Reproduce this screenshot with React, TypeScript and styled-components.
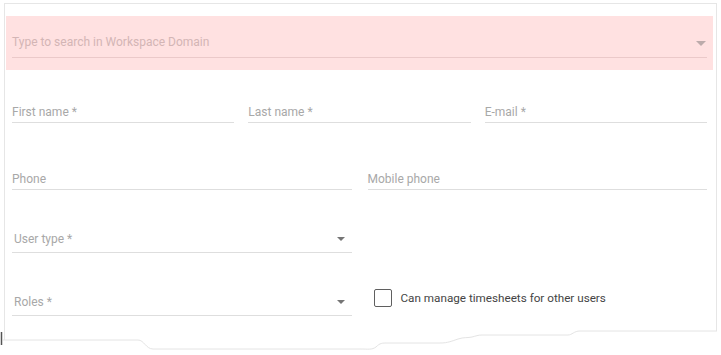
import styled, { createGlobalStyle } from 'styled-components'

const GlobalStyle = createGlobalStyle`
	html, body {
		margin: 0;
		background: #fff;
		font-family: Roboto, 'Noto Sans', sans-serif;
	}
`

function Arrow({ color, width, height }: { color: string; width: number; height: number }) {
	return (
		<svg width={width} height={height} viewBox={`0 0 ${width} ${height}`}>
			<polygon points={`0,0 ${width},0 ${width / 2},${height}`} fill={color} />
		</svg>
	)
}

function TornEdge() {
	// page coords shifted by y=320
	const line =
		'M3 20 L138 20 C144 20 146 29 153 29 L360 29 C368 29 372 30 376 27 C380 23 382 23 388 23 L440 23 C448 23 452 21 458 19 C464 17 468 18 472 17 C476 16 478 15 482 15 L568 15 C572 15 574 11 580 11 L717 11'
	return (
		<Tear width={721} height={35} viewBox="0 0 721 35">
			<path d={line + ' L721 11 L721 35 L0 35 L0 20 Z'} fill="#fff" />
			<path d={line} fill="none" stroke="#e4e4e4" strokeWidth={1} />
			<line x1={1.5} y1={12} x2={1.5} y2={25} stroke="#555" strokeWidth={1.5} />
		</Tear>
	)
}

function App() {
	return (
		<Page>
			<GlobalStyle />
			<Panel>
				<SearchBand>
					<SearchField>
						<SearchText>Type to search in Workspace Domain</SearchText>
						<Arrow color="#bcabab" width={10} height={5} />
					</SearchField>
				</SearchBand>
				<Form>
					<Row $cols={3} $top={34}>
						<Field>
							<Label>First name *</Label>
						</Field>
						<Field>
							<Label>Last name *</Label>
						</Field>
						<Field>
							<Label>E-mail *</Label>
						</Field>
					</Row>
					<Row $cols={2} $top={48} $gap={16}>
						<Field>
							<Label>Phone</Label>
						</Field>
						<Field>
							<Label>Mobile phone</Label>
						</Field>
					</Row>
					<Row $cols={2} $top={41} $gap={16}>
						<Field $select>
							<Label>User type *</Label>
							<Arrow color="#757575" width={8} height={4} />
						</Field>
						<div />
					</Row>
					<Row $cols={2} $top={41} $gap={16}>
						<Field $select>
							<Label>Roles *</Label>
							<Arrow color="#757575" width={8} height={4} />
						</Field>
						<CheckRow>
							<Box />
							<CheckLabel>Can manage timesheets for other users</CheckLabel>
						</CheckRow>
					</Row>
				</Form>
				<TornEdge />
			</Panel>
		</Page>
	)
}

const Page = styled.div`
	padding: 3px 0 0 4px;
	height: 352px;
	overflow: hidden;
`

const Panel = styled.div`
	position: relative;
	width: 713px;
	height: 360px;
	box-sizing: border-box;
	border: 1px solid #e6e6e6;
	border-bottom: none;
	padding: 12px 3px 0 1px;
`

const SearchBand = styled.div`
	background: #ffe1e1;
	padding: 18px 6px 12px 6px;
`

const SearchField = styled.div`
	display: flex;
	align-items: center;
	justify-content: space-between;
	padding: 0 1px 7px 0;
	border-bottom: 1px solid #ebc9c9;

	svg {
		margin-top: 2px;
	}
`

const SearchText = styled.span`
	font-size: 12px;
	line-height: 16px;
	color: #d3b5b5;
`

const Form = styled.div`
	padding: 0 6px;
`

const Row = styled.div<{ $cols: number; $top: number; $gap?: number }>`
	display: grid;
	grid-template-columns: repeat(${p => p.$cols}, 1fr);
	column-gap: ${p => p.$gap ?? 14}px;
	margin-top: ${p => p.$top}px;
	align-items: start;
`

const Field = styled.div<{ $select?: boolean }>`
	display: flex;
	align-items: center;
	justify-content: space-between;
	padding: 0 ${p => (p.$select ? '7px' : '0')} ${p => (p.$select ? '5px' : '2px')}
		${p => (p.$select ? '2px' : '0')};
	border-bottom: 1px solid #dedede;
`

const Label = styled.span`
	font-size: 12px;
	line-height: 16px;
	color: #a8a8a8;
`

const CheckRow = styled.div`
	display: flex;
	align-items: center;
	gap: 9px;
	margin-top: -5px;
	padding-left: 6px;
`

const Box = styled.span`
	width: 16px;
	height: 16px;
	border: 1px solid #5f5f5f;
	border-radius: 2px;
`

const CheckLabel = styled.span`
	font-size: 11.7px;
	line-height: 16px;
	color: #444;
`

const Tear = styled.svg`
	position: absolute;
	left: -5px;
	top: 316px;
	display: block;
`

export default App
